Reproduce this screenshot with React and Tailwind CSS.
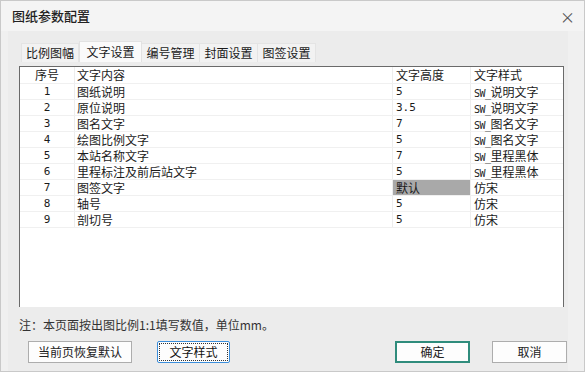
import React from "react";

const rows = [
  { no: 1, text: "图纸说明", height: "5", style: "SW_说明文字" },
  { no: 2, text: "原位说明", height: "3.5", style: "SW_说明文字" },
  { no: 3, text: "图名文字", height: "7", style: "SW_图名文字" },
  { no: 4, text: "绘图比例文字", height: "5", style: "SW_图名文字" },
  { no: 5, text: "本站名称文字", height: "7", style: "SW_里程黑体" },
  { no: 6, text: "里程标注及前后站文字", height: "5", style: "SW_里程黑体" },
  { no: 7, text: "图签文字", height: "默认", style: "仿宋", selected: true },
  { no: 8, text: "轴号", height: "5", style: "仿宋" },
  { no: 9, text: "剖切号", height: "5", style: "仿宋" },
];

const tabs = ["比例图幅", "文字设置", "编号管理", "封面设置", "图签设置"];

export default function App() {
  return (
    <div className="w-[585px] h-[372px] overflow-hidden border border-[#c9c9c9] bg-[#f0f0f0] flex flex-col text-[#1a1a1a] font-['Noto_Sans_CJK_SC','Noto_Sans',sans-serif]">
      {/* title bar */}
      <div className="h-[30px] shrink-0 bg-[#f4f4f4] flex items-center justify-between pl-[11px] pr-[9px]">
        <span className="text-[13px] font-medium text-[#222]">图纸参数配置</span>
        <span className="text-[15px] text-[#555] leading-none">×</span>
      </div>

      {/* body */}
      <div className="flex-1 flex px-[7px]">
        <div className="flex-1 bg-[#ececec] flex flex-col pr-[1px] mr-[10px]">
          {/* tabs */}
          <div className="flex items-end h-[31px] pl-[13px]">
            {tabs.map((t, i) =>
              i === 1 ? (
                <div key={t} className="h-[21px] w-[63px] text-center bg-[#fafafa] border-t border-x border-[#e2e2e2] text-[12px] leading-[20px]">
                  {t}
                </div>
              ) : (
                <div key={t} className="h-[19px] w-[58px] text-center bg-[#f2f2f2] border-t border-r border-[#e4e4e4] first:border-l text-[12px] leading-[18px]">
                  {t}
                </div>
              )
            )}
          </div>

          {/* table */}
          <div className="mt-[4px] ml-[11px] mr-[3px] h-[241px] shrink-0 bg-white border-l border-t border-r border-[#6a6a6a] text-[12px] font-['Noto_Sans_CJK_SC',sans-serif]">
            <div className="flex h-[17px] leading-[16px] border-b border-[#f0f0f0]">
              <div className="w-[55px] text-center border-r border-[#ededed]">序号</div>
              <div className="w-[318px] pl-[2px] border-r border-[#ededed]">文字内容</div>
              <div className="w-[78px] pl-[3px] border-r border-[#ededed]">文字高度</div>
              <div className="flex-1 pl-[3px]">文字样式</div>
            </div>
            {rows.map((r) => (
              <div key={r.no} className="flex h-[16px] leading-[15px] border-b border-[#f0f0f0]">
                <div className="w-[55px] text-center border-r border-[#ededed] font-['DejaVu_Sans_Mono',monospace] text-[11px]">{r.no}</div>
                <div className="w-[318px] pl-[2px] border-r border-[#ededed]">{r.text}</div>
                <div className={`w-[78px] border-r border-[#ededed] ${r.selected ? "bg-[#a9a9a9] pl-[3px]" : "pl-[3px] font-['DejaVu_Sans_Mono',monospace] text-[11px]"}`}>
                  {r.height}
                </div>
                <div className="flex-1 pl-[3px]">
                  {r.style.startsWith("SW_") ? (
                    <>
                      <span className="font-['DejaVu_Sans_Mono',monospace] text-[10px] tracking-[-0.5px]">SW_</span>
                      {r.style.slice(3)}
                    </>
                  ) : (
                    r.style
                  )}
                </div>
              </div>
            ))}
          </div>

          {/* note */}
          <div className="mt-[10px] ml-[11px] text-[12px] text-[#333] h-[16px] leading-[16px]">
            注：本页面按出图比例1:1填写数值，单位mm。
          </div>

          {/* buttons */}
          <div className="mt-[8px] flex items-center pl-[20px]">
            <button className="w-[104px] h-[22px] border border-[#adadad] bg-[#fdfdfd] text-[12px] text-[#222]">
              当前页恢复默认
            </button>
            <button className="ml-[25px] w-[73px] h-[22px] rounded-[2px] border border-[#3b8edb] bg-[#fdfdfd] text-[12px] text-[#111] p-[1px]">
              <span className="flex w-full h-full items-center justify-center border border-dotted border-[#333]">文字样式</span>
            </button>
            <button className="ml-[165px] w-[75px] h-[22px] border-2 border-[#2f8c7c] bg-[#fdfdfd] text-[12px] text-[#222]">
              确定
            </button>
            <button className="ml-[22px] w-[75px] h-[22px] border border-[#adadad] bg-[#fdfdfd] text-[12px] text-[#222]">
              取消
            </button>
          </div>
        </div>
      </div>
    </div>
  );
}
